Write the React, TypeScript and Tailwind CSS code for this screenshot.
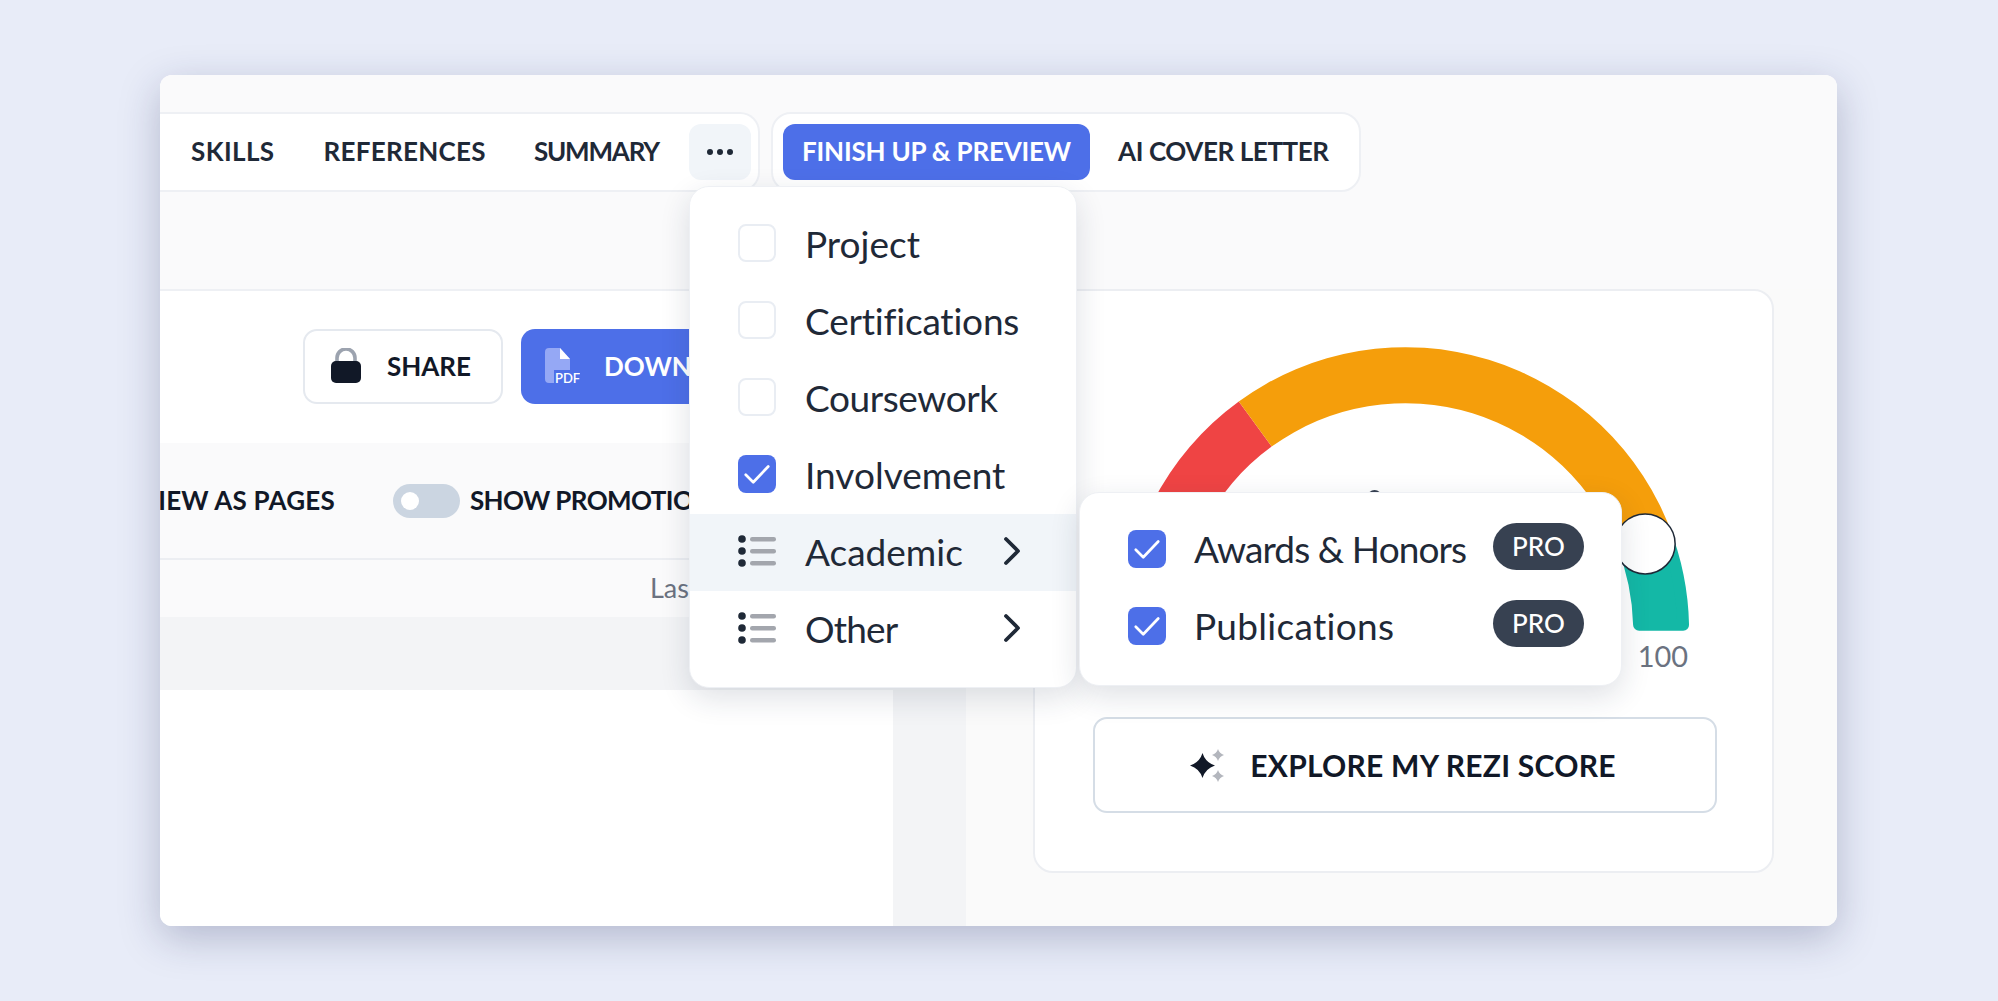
import React from 'react';

const CX = 371;
const CY = 340;
const OUTER = 284;
const INNER = 228;

// pct 0-100 runs from the left end of the gauge to the right end
const pt = (pct: number, r: number) => {
  const a = Math.PI - (pct / 100) * Math.PI;
  return `${(CX + r * Math.cos(a)).toFixed(2)} ${(CY - r * Math.sin(a)).toFixed(2)}`;
};

const sector = (from: number, to: number, outer = OUTER, inner = INNER) =>
  `M ${pt(from, outer)} A ${outer} ${outer} 0 0 1 ${pt(to, outer)} L ${pt(to, inner)} A ${inner} ${inner} 0 0 0 ${pt(from, inner)} Z`;

// last piece ends flat on the baseline, rounded by the stroke
const tealEnd = `M ${pt(88, 278)} A 278 278 0 0 1 ${pt(99.31, 278)} L ${pt(99.18, 234)} A 234 234 0 0 0 ${pt(88, 234)} Z`;

const Gauge = () => (
  <svg viewBox="0 0 738 426" className="block w-full h-[426px] shrink-0">
    <path d={tealEnd} fill="#14b8a6" stroke="#14b8a6" strokeWidth="12" strokeLinejoin="round" />
    <path d={sector(0, 30)} fill="#ef4444" />
    <path d={sector(30, 89)} fill="#f59e0b" />
    <circle cx="340" cy="206" r="7" fill="#374151" />
    <circle cx="611" cy="253" r="30" fill="#ffffff" stroke="#1f2937" strokeWidth="1.5" />
    <text x="654" y="376" textAnchor="end" fontSize="29" fill="#6b7280" fontFamily="Lato, sans-serif">100</text>
  </svg>
);

const Check = ({ on }: { on: boolean }) => (
  <span className={`flex h-[38px] w-[38px] shrink-0 items-center justify-center rounded-[8px] ${on ? 'bg-[#4d6fe8]' : 'border-2 border-[#e9edf3] bg-white'}`}>
    {on && (
      <svg viewBox="0 0 24 24" className="h-[36px] w-[36px]" fill="none" stroke="#ffffff" strokeWidth="1.8" strokeLinecap="round" strokeLinejoin="round">
        <path d="M4.5 12.5l5 5L19.5 7" />
      </svg>
    )}
  </span>
);

const ListIcon = () => (
  <svg viewBox="0 0 38 32" className="h-[32px] w-[38px] shrink-0">
    <circle cx="4" cy="4" r="3.8" fill="#1f2937" />
    <circle cx="4" cy="16" r="3.8" fill="#1f2937" />
    <circle cx="4" cy="28" r="3.8" fill="#1f2937" />
    <rect x="12" y="2" width="26" height="4.4" rx="2.2" fill="#a3a6ad" />
    <rect x="12" y="14" width="26" height="4.4" rx="2.2" fill="#a3a6ad" />
    <rect x="12" y="26" width="26" height="4.4" rx="2.2" fill="#a3a6ad" />
  </svg>
);

const Chevron = () => (
  <svg viewBox="0 0 20 30" className="h-[30px] w-[20px] shrink-0" fill="none" stroke="#1f2937" strokeWidth="3.8" strokeLinecap="round" strokeLinejoin="round">
    <polyline points="4,3 16,15 4,27" />
  </svg>
);

const labelCls = "text-[37px] leading-none text-[#1f2937] [font-variant-ligatures:none]";

const CheckRow = ({ label, on, track = '' }: { label: string; on: boolean; track?: string }) => (
  <div className="flex h-[77px] items-center gap-[29px] pb-[3px] pl-[48px]">
    <Check on={on} />
    <span className={`${labelCls} ${track}`}>{label}</span>
  </div>
);

const GroupRow = ({ label, active, track = '' }: { label: string; active?: boolean; track?: string }) => (
  <div className={`flex h-[77px] items-center gap-[29px] pb-[3px] pl-[48px] pr-[54px] ${active ? 'bg-[#f1f5f9]' : ''}`}>
    <ListIcon />
    <span className={`flex-1 ${labelCls} ${track}`}>{label}</span>
    <Chevron />
  </div>
);

const ProRow = ({ label, track }: { label: string; track: string }) => (
  <div className="flex h-[77px] items-center pl-[48px] pr-[37px]">
    <Check on />
    <span className={`ml-[28px] flex-1 ${labelCls} ${track}`}>{label}</span>
    <span className="-mt-[5px] flex h-[47px] w-[91px] items-center justify-center rounded-full bg-[#374151] text-[26px] font-medium text-white">PRO</span>
  </div>
);

const Sparkle = () => (
  <svg viewBox="0 0 34 33" className="h-[33px] w-[34px] shrink-0">
    <path d="M12.500 4Q15.500 13.500 25 16.500Q15.500 19.500 12.500 29Q9.500 19.500 0 16.500Q9.500 13.500 12.500 4Z" fill="#111827" />
    <path d="M28 0Q29.400 4.600 34 6Q29.400 7.400 28 12Q26.600 7.400 22 6Q26.600 4.600 28 0ZM28 21Q29.400 25.600 34 27Q29.400 28.400 28 33Q26.600 28.400 22 27Q26.600 25.600 28 21Z" fill="#b3b6bd" />
  </svg>
);

const LockIcon = () => (
  <svg viewBox="0 0 32 36" className="h-[36px] w-[32px] shrink-0">
    <path d="M7 16V10a9 9 0 0 1 18 0v6" fill="none" stroke="#9ca3af" strokeWidth="3.6" />
    <rect x="1" y="13" width="30" height="22" rx="5" fill="#111827" />
  </svg>
);

const PdfIcon = () => (
  <svg viewBox="0 0 35 36" className="h-[36px] w-[35px] shrink-0">
    <path d="M4 0h11l10 11v11H9v13H4a4 4 0 0 1-4-4V4a4 4 0 0 1 4-4z" fill="#95a8f5" />
    <path d="M15 0l10 11H15z" fill="#ffffff" />
    <text x="10" y="35" fontSize="13" fontWeight="600" fill="#ffffff" fontFamily="Lato, sans-serif">PDF</text>
  </svg>
);

export default function App() {
  return (
    <div className="h-[1001px] w-[1998px] overflow-hidden bg-[#e8ecf8] pl-[160px] pt-[75px] font-['Lato',sans-serif]">
      <div className="relative flex h-[851px] w-[1677px] flex-col overflow-hidden rounded-[12px] bg-white shadow-[0_12px_40px_rgba(30,40,90,0.26)]">
        <div className="h-[214px] shrink-0 bg-[#fafafb] pt-[37px]">
          <div className="flex gap-[11px]">
            <div className="flex h-[80px] w-[600px] items-center rounded-r-[20px] border-y-2 border-r-2 border-[#eef0f4] bg-white pb-[2px] pl-[31px] text-[26px] font-bold text-[#1f2937]">
              <span className="tracking-[0.4px]">SKILLS</span>
              <span className="ml-[49px] tracking-[0.3px]">REFERENCES</span>
              <span className="ml-[48px] tracking-[-1.2px]">SUMMARY</span>
              <span className="ml-[30px] mt-[2px] flex h-[56px] w-[62px] items-center justify-center gap-[4px] rounded-[12px] bg-[#f1f5f9]">
                <i className="h-[6px] w-[6px] rounded-full bg-[#1f2937]" />
                <i className="h-[6px] w-[6px] rounded-full bg-[#1f2937]" />
                <i className="h-[6px] w-[6px] rounded-full bg-[#1f2937]" />
              </span>
            </div>
            <div className="flex h-[80px] w-[590px] items-center rounded-[20px] border-2 border-[#eef0f4] bg-white pl-[10px] text-[26px] font-bold text-[#1f2937]">
              <span className="flex h-[56px] w-[307px] items-center justify-center rounded-[12px] bg-[#4d6fe8] pb-[2px] tracking-[-0.2px] text-white">FINISH UP &amp; PREVIEW</span>
              <span className="ml-[28px] pb-[2px] tracking-[-0.4px]">AI COVER LETTER</span>
            </div>
          </div>
        </div>

        <div className="flex flex-1">
          <div className="w-[733px] shrink-0 overflow-hidden border-t-2 border-[#eef0f4] bg-white">
            <div className="flex h-[152px] items-center gap-[18px] pb-[2px] pl-[143px]">
              <div className="flex h-[75px] w-[200px] items-center gap-[25px] rounded-[14px] border-2 border-[#e5e9ef] pl-[25px] text-[26px] font-bold text-[#111827]">
                <LockIcon />
                <span>SHARE</span>
              </div>
              <div className="flex h-[75px] w-[340px] shrink-0 items-center gap-[24px] rounded-[14px] bg-[#4d6fe8] pl-[24px] text-[26px] font-bold text-white">
                <PdfIcon />
                <span>DOWNLOAD</span>
              </div>
            </div>
            <div className="flex h-[117px] items-center whitespace-nowrap border-b-2 border-[#eceef2] bg-[#fafafb] text-[26px] font-bold text-[#111827]">
              <span className="-ml-[20px] tracking-[0.2px]">VIEW AS PAGES</span>
              <span className="ml-[58px] flex h-[34px] w-[67px] shrink-0 items-center rounded-full bg-[#cbd5e1] pl-[8px]">
                <i className="h-[18px] w-[18px] rounded-full bg-white" />
              </span>
              <span className="ml-[10px] tracking-[-0.6px]">SHOW PROMOTIONS</span>
            </div>
            <div className="flex h-[57px] items-center whitespace-nowrap bg-[#fafafb] pl-[490px] text-[27px] text-[#6b7280]">
              <span>Last saved</span>
            </div>
            <div className="h-[73px] bg-[#f3f4f6]" />
          </div>
          <div className="w-[73px] shrink-0 bg-[#f3f4f6]" />
          <div className="flex-1 bg-[#fafafa] pl-[67px] pr-[63px]">
            <div className="flex h-[584px] flex-col rounded-[20px] border-2 border-[#eceef2] bg-white">
              <Gauge />
              <div className="ml-[58px] mr-[55px] flex h-[96px] items-center justify-center gap-[26px] rounded-[14px] border-2 border-[#d5dde6] pr-[4px] text-[30px] font-bold text-[#111827]">
                <Sparkle />
                <span className="tracking-[0.25px]">EXPLORE MY REZI SCORE</span>
              </div>
            </div>
          </div>
        </div>

        <div className="absolute left-[529px] top-[111px] h-[502px] w-[388px] rounded-[20px] border border-[#eef0f4] bg-white pt-[19px] shadow-[0_10px_30px_rgba(30,40,70,0.14)]">
          <CheckRow label="Project" on={false} />
          <CheckRow label="Certifications" on={false} track="tracking-[-0.2px]" />
          <CheckRow label="Coursework" on={false} track="tracking-[-0.4px]" />
          <CheckRow label="Involvement" on />
          <GroupRow label="Academic" active />
          <GroupRow label="Other" track="tracking-[-0.8px]" />
        </div>

        <div className="absolute left-[919px] top-[417px] h-[194px] w-[543px] rounded-[20px] border border-[#eef0f4] bg-white pt-[17px] shadow-[0_10px_30px_rgba(30,40,70,0.14)]">
          <ProRow label="Awards & Honors" track="tracking-[-0.9px]" />
          <ProRow label="Publications" track="tracking-[0.3px]" />
        </div>
      </div>
    </div>
  );
}
